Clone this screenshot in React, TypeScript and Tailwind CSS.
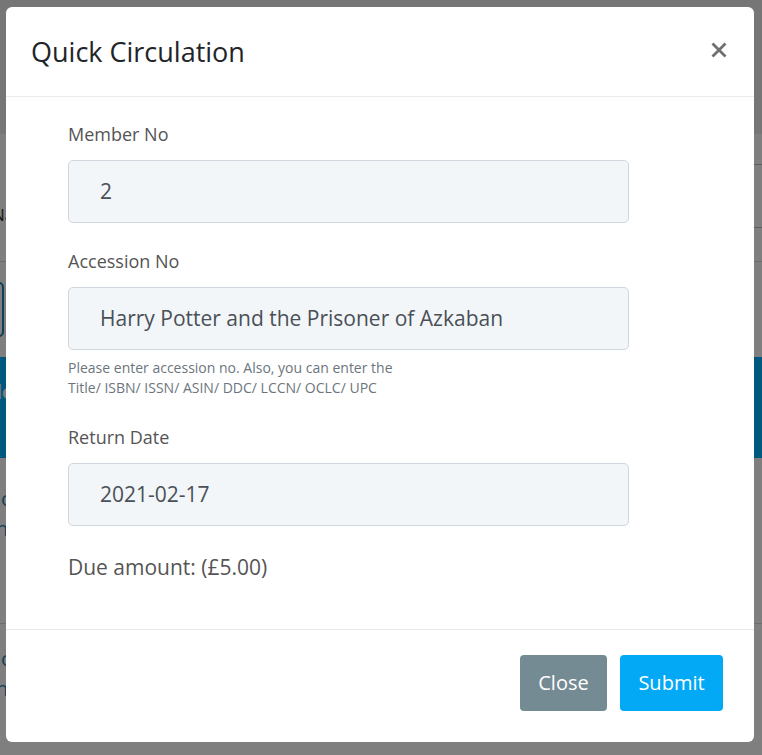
import React from "react";

const Field = ({
  label,
  value,
  className = "",
}: {
  label: string;
  value: string;
  className?: string;
}) => (
  <div className={className}>
    <label className="block text-[18px] leading-[27px] text-[#555]">{label}</label>
    <div className="mt-[12px] flex h-[63px] w-[561px] items-center rounded-[5px] border border-[#cfd6dd] bg-[#f3f6f9] pl-[31px] text-[21px] text-[#495057]">
      {value}
    </div>
  </div>
);

const BackgroundPage = () => (
  <div className="flex h-[755px] flex-col bg-white">
    <div className="h-[134px] bg-[#ececec]" />
    <div className="flex h-[128px] justify-between border-b border-[#dcdcdc]">
      <span className="-ml-[8px] mt-[68px] text-[17px] text-[#333]">Name</span>
      <div className="mr-[-40px] mt-[30px] flex h-[64px] w-[120px] items-center border border-[#bbb] pl-[10px] text-[20px] text-[#888]">
        A
      </div>
    </div>
    <div className="flex h-[95px] items-center">
      <div className="-ml-[20px] h-[55px] w-[24px] rounded-[5px] border-2 border-[#1f7fae]" />
    </div>
    <div className="h-[101px] bg-[#03b0ff] pt-[20px] text-[20px] font-bold text-white">
      <span className="-ml-[4px]">lo</span>
    </div>
    <div className="flex flex-col pt-[26px] text-[20px] leading-[30px] text-[#1c7bb4]">
      <span className="-ml-[4px]">lo</span>
      <span className="-ml-[4px]">h</span>
    </div>
    <div className="mt-[79px] border-t border-[#ddd] pt-[20px] text-[20px] leading-[30px] text-[#1c7bb4]">
      <span className="-ml-[4px] block">lo</span>
      <span className="-ml-[4px] block">h</span>
    </div>
  </div>
);

export default function App() {
  return (
    <div className="relative h-[755px] w-[762px] overflow-hidden font-['Open_Sans',sans-serif]">
      <BackgroundPage />
      <div className="absolute inset-0 bg-black/50" />
      <div className="absolute inset-0 pl-[6px] pt-[7px]">
        <div className="flex h-[735px] w-[748px] flex-col rounded-[6px] bg-white">
          <div className="flex h-[90px] shrink-0 items-center justify-between border-b border-[#e9ecef] pl-[25px] pr-[27px]">
            <h2 className="text-[27px] leading-[36px] text-[#212529]">Quick Circulation</h2>
            <button className="-mt-[3px] flex h-[16px] w-[16px] items-center justify-center" aria-label="Close">
              <svg width="16" height="16" viewBox="0 0 16 16">
                <path d="M1.5 1.5 L14.5 14.5 M14.5 1.5 L1.5 14.5" stroke="#6f6f6f" strokeWidth="2.8" strokeLinecap="butt" />
              </svg>
            </button>
          </div>

          <div className="flex-1 pl-[62px] pt-[24px]">
            <Field label="Member No" value="2" />
            <Field label="Accession No" value="Harry Potter and the Prisoner of Azkaban" className="mt-[25px]" />
            <p className="mt-[8px] text-[14px] leading-[20px] text-[#6c757d]">
              Please enter accession no. Also, you can enter the
              <br />
              Title/ ISBN/ ISSN/ ASIN/ DDC/ LCCN/ OCLC/ UPC
            </p>
            <Field label="Return Date" value="2021-02-17" className="mt-[26px]" />
            <p className="mt-[26px] text-[21px] leading-[30px] text-[#555]">Due amount: (£5.00)</p>
          </div>

          <div className="flex h-[113px] shrink-0 items-start justify-end gap-[13px] border-t border-[#e9ecef] pr-[31px] pt-[25px]">
            <button className="h-[56px] w-[87px] rounded-[4px] bg-[#758b94] text-[20px] text-white">Close</button>
            <button className="h-[56px] w-[103px] rounded-[4px] bg-[#03a9f4] text-[20px] text-white">Submit</button>
          </div>
        </div>
      </div>
    </div>
  );
}
